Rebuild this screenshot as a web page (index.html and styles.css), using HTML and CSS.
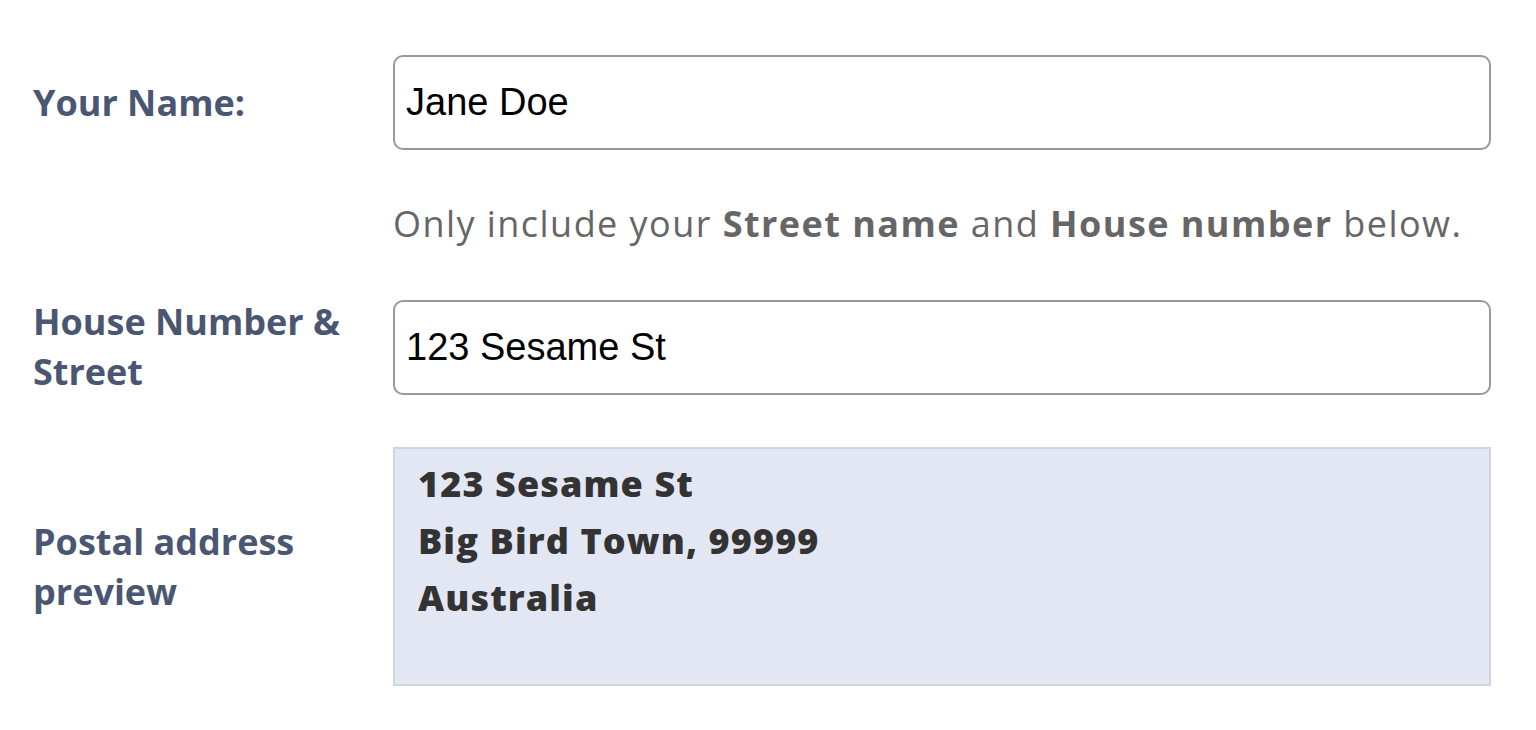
FILE: index.html
```html
<!DOCTYPE html>
<html lang="en">
  <head>
    <meta charset="UTF-8">
    <meta name="viewport" content="width=device-width, initial-scale=1.0">
    <title>Postal address</title>
    <link rel="stylesheet" href="styles.css">
  </head>
  <body>
    <form class="address-form">
      <div class="field">
        <label for="name" class="field-label">Your Name:</label>
        <input type="text" id="name" class="field-input" value="Jane Doe">
      </div>

      <p class="hint">Only include your <strong>Street name</strong> and <strong>House number</strong> below.</p>

      <div class="field">
        <label for="street" class="field-label">House Number &amp; Street</label>
        <input type="text" id="street" class="field-input" value="123 Sesame St">
      </div>

      <div class="field field-preview">
        <span class="field-label">Postal address preview</span>
        <div class="preview">
          <div>123 Sesame St</div>
          <div>Big Bird Town, 99999</div>
          <div>Australia</div>
        </div>
      </div>
    </form>
  </body>
</html>
```

FILE: styles.css
```css
body {
  margin: 0;
  background-color: #ffffff;
  font-family: "Open Sans", "Liberation Sans", sans-serif;
}

.address-form {
  padding: 55px 45px 0 33px;
}

.field {
  display: flex;
  align-items: center;
}

.field-label {
  flex: 0 0 360px;
  font-size: 36px;
  font-weight: 700;
  line-height: 50px;
  color: #4a5672;
  padding-right: 10px;
  box-sizing: border-box;
}

.field-input {
  flex: 1;
  height: 95px;
  box-sizing: border-box;
  border: 2px solid #999999;
  border-radius: 10px;
  padding: 0 11px;
  font-family: "Liberation Sans", Arial, sans-serif;
  font-size: 38px;
  color: #000000;
  background: #ffffff;
}

.hint {
  margin: 49px 0 48px 360px;
  font-size: 36px;
  line-height: 50px;
  letter-spacing: 1.45px;
  color: #666666;
}

.hint strong {
  font-weight: 700;
}

.field-preview {
  margin-top: 50px;
}

.preview {
  flex: 1;
  height: 239px;
  box-sizing: border-box;
  background-color: #e3e7f4;
  border: 2px solid #cfd4e2;
  padding: 6px 23px;
  font-size: 36px;
  font-weight: 800;
  line-height: 57px;
  letter-spacing: 1.1px;
  color: #333333;
}
```
